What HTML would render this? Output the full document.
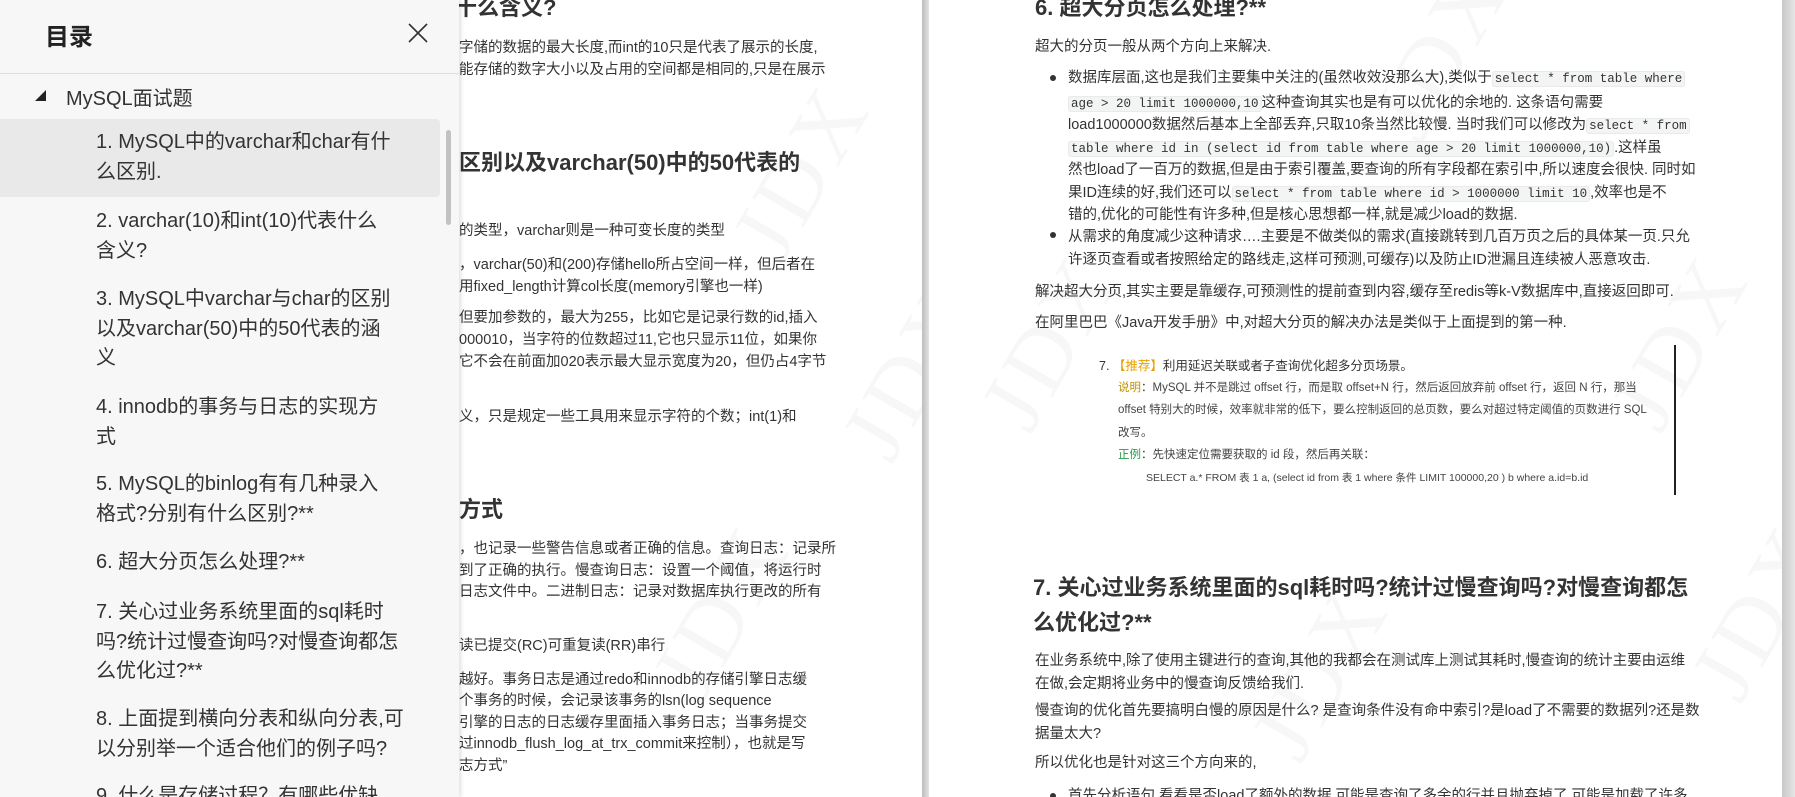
<!DOCTYPE html>
<html><head><meta charset="utf-8"><style>
*{margin:0;padding:0;box-sizing:border-box}
html,body{overflow:hidden}
body{width:1795px;height:797px;background:#d9d9d9;position:relative;font-family:"Liberation Sans","Noto Sans CJK SC",sans-serif;color:#333}
.pg{position:absolute;top:0;height:797px;background:#fff;overflow:hidden}
.l{position:absolute;white-space:nowrap;font-size:14.5px;line-height:22px;color:#333}
.h{position:absolute;white-space:nowrap;font-size:22px;font-weight:bold;color:#333;line-height:34px}
code{font-family:"Liberation Mono","DejaVu Sans Mono",monospace;font-size:12.5px;background:#f3f4f4;border:1px solid #eaeaea;border-radius:3px;padding:0 2px;color:#333}
.wm{position:absolute;font-family:"Liberation Serif",serif;font-size:90px;color:#f7f7f7;transform:rotate(-60deg);letter-spacing:6px}
.side{position:absolute;left:0;top:0;width:459px;height:797px;background:#f7f7f7;box-shadow:2px 0 4px rgba(0,0,0,.12);overflow:hidden}
.it{position:absolute;left:96px;font-size:20px;line-height:29.5px;color:#333;white-space:nowrap}
.dot{position:absolute;left:1050px;width:6px;height:6px;border-radius:3px;background:#333}
.im{position:absolute;white-space:nowrap;font-size:11.5px;line-height:22px;color:#444}
</style></head><body>

<div class="pg" style="left:440px;width:482px">
<div class="wm" style="left:270px;top:120px">JDX</div>
<div class="wm" style="left:190px;top:560px">JDX</div>
<div class="wm" style="left:380px;top:320px">JDX</div>
</div>
<div class="h" style="left:455px;top:-9px">十么含义?</div>
<div class="l" style="left:459px;top:37px">字储的数据的最大长度,而int的10只是代表了展示的长度,</div>
<div class="l" style="left:459px;top:59px">能存储的数字大小以及占用的空间都是相同的,只是在展示</div>
<div class="h" style="left:459px;top:146px">区别以及varchar(50)中的50代表的</div>
<div class="l" style="left:459px;top:220px">的类型，varchar则是一种可变长度的类型</div>
<div class="l" style="left:459px;top:254px">，varchar(50)和(200)存储hello所占空间一样，但后者在</div>
<div class="l" style="left:459px;top:276px">用fixed_length计算col长度(memory引擎也一样)</div>
<div class="l" style="left:459px;top:307px">但要加参数的，最大为255，比如它是记录行数的id,插入</div>
<div class="l" style="left:459px;top:329px">000010，当字符的位数超过11,它也只显示11位，如果你</div>
<div class="l" style="left:459px;top:351px">它不会在前面加020表示最大显示宽度为20，但仍占4字节</div>
<div class="l" style="left:459px;top:406px">义，只是规定一些工具用来显示字符的个数；int(1)和</div>
<div class="h" style="left:459px;top:493px">方式</div>
<div class="l" style="left:459px;top:538px">，也记录一些警告信息或者正确的信息。查询日志：记录所</div>
<div class="l" style="left:459px;top:560px">到了正确的执行。慢查询日志：设置一个阈值，将运行时</div>
<div class="l" style="left:459px;top:581px">日志文件中。二进制日志：记录对数据库执行更改的所有</div>
<div class="l" style="left:459px;top:635px">读已提交(RC)可重复读(RR)串行</div>
<div class="l" style="left:459px;top:669px">越好。事务日志是通过redo和innodb的存储引擎日志缓</div>
<div class="l" style="left:459px;top:690px">个事务的时候，会记录该事务的lsn(log sequence</div>
<div class="l" style="left:459px;top:712px">引擎的日志的日志缓存里面插入事务日志；当事务提交</div>
<div class="l" style="left:459px;top:733px">过innodb_flush_log_at_trx_commit来控制），也就是写</div>
<div class="l" style="left:459px;top:755px">志方式”</div>

<div style="position:absolute;left:922px;top:0;width:7px;height:797px;background:linear-gradient(90deg,#bdbdbd,#e2e2e2)"></div>

<div class="pg" style="left:929px;width:853px">
<div class="wm" style="left:420px;top:0px">JDX</div>
<div class="wm" style="left:30px;top:290px">JDX</div>
<div class="wm" style="left:660px;top:290px">JDX</div>
<div class="wm" style="left:300px;top:620px">JDX</div>
<div class="wm" style="left:740px;top:560px">JDX</div>
</div>
<div style="position:absolute;left:1782px;top:0;width:13px;height:797px;background:linear-gradient(90deg,#c8c8c8,#e6e6e6)"></div>

<div class="h" style="left:1035px;top:-9px">6. 超大分页怎么处理?**</div>
<div class="l" style="left:1035px;top:36px">超大的分页一般从两个方向上来解决.</div>
<div class="dot" style="top:75px"></div>
<div class="l" style="left:1068px;top:67px">数据库层面,这也是我们主要集中关注的(虽然收效没那么大),类似于<code>select * from table where</code></div>
<div class="l" style="left:1068px;top:92px"><code>age &gt; 20 limit 1000000,10</code>这种查询其实也是有可以优化的余地的. 这条语句需要</div>
<div class="l" style="left:1068px;top:114px">load1000000数据然后基本上全部丢弃,只取10条当然比较慢. 当时我们可以修改为<code>select * from</code></div>
<div class="l" style="left:1068px;top:137px"><code>table where id in (select id from table where age &gt; 20 limit 1000000,10)</code>.这样虽</div>
<div class="l" style="left:1068px;top:159px">然也load了一百万的数据,但是由于索引覆盖,要查询的所有字段都在索引中,所以速度会很快. 同时如</div>
<div class="l" style="left:1068px;top:182px">果ID连续的好,我们还可以<code>select * from table where id &gt; 1000000 limit 10</code>,效率也是不</div>
<div class="l" style="left:1068px;top:204px">错的,优化的可能性有许多种,但是核心思想都一样,就是减少load的数据.</div>
<div class="dot" style="top:232px"></div>
<div class="l" style="left:1068px;top:226px">从需求的角度减少这种请求….主要是不做类似的需求(直接跳转到几百万页之后的具体某一页.只允</div>
<div class="l" style="left:1068px;top:249px">许逐页查看或者按照给定的路线走,这样可预测,可缓存)以及防止ID泄漏且连续被人恶意攻击.</div>
<div class="l" style="left:1035px;top:281px">解决超大分页,其实主要是靠缓存,可预测性的提前查到内容,缓存至redis等k-V数据库中,直接返回即可.</div>
<div class="l" style="left:1035px;top:312px">在阿里巴巴《Java开发手册》中,对超大分页的解决办法是类似于上面提到的第一种.</div>

<div style="position:absolute;left:1674px;top:345px;width:2px;height:150px;background:#222"></div>
<div class="im" style="left:1099px;top:355px;font-size:12.5px;color:#333">7. <span style="color:#e8a000">【推荐】</span>利用延迟关联或者子查询优化超多分页场景。</div>
<div class="im" style="left:1118px;top:377px"><span style="color:#c09000">说明</span>：MySQL 并不是跳过 offset 行，而是取 offset+N 行，然后返回放弃前 offset 行，返回 N 行，那当</div>
<div class="im" style="left:1118px;top:399px">offset 特别大的时候，效率就非常的低下，要么控制返回的总页数，要么对超过特定阈值的页数进行 SQL</div>
<div class="im" style="left:1118px;top:422px">改写。</div>
<div class="im" style="left:1118px;top:444px"><span style="color:#2a9a4a">正例</span>：先快速定位需要获取的 id 段，然后再关联：</div>
<div class="im" style="left:1146px;top:467px;font-size:10.5px">SELECT a.* FROM 表 1 a, (select id from 表 1 where 条件 LIMIT 100000,20 ) b where a.id=b.id</div>

<div class="h" style="left:1033px;top:571px">7. 关心过业务系统里面的sql耗时吗?统计过慢查询吗?对慢查询都怎</div>
<div class="h" style="left:1033px;top:606px">么优化过?**</div>
<div class="l" style="left:1035px;top:650px">在业务系统中,除了使用主键进行的查询,其他的我都会在测试库上测试其耗时,慢查询的统计主要由运维</div>
<div class="l" style="left:1035px;top:673px">在做,会定期将业务中的慢查询反馈给我们.</div>
<div class="l" style="left:1035px;top:700px">慢查询的优化首先要搞明白慢的原因是什么? 是查询条件没有命中索引?是load了不需要的数据列?还是数</div>
<div class="l" style="left:1035px;top:723px">据量太大?</div>
<div class="l" style="left:1035px;top:752px">所以优化也是针对这三个方向来的,</div>
<div class="dot" style="top:793px"></div>
<div class="l" style="left:1068px;top:785px">首先分析语句,看看是否load了额外的数据,可能是查询了多余的行并且抛弃掉了,可能是加载了许多</div>

<div class="side">
<div style="position:absolute;left:45px;top:17px;font-size:24px;font-weight:bold;color:#222">目录</div>
<svg style="position:absolute;left:408px;top:23px" width="20" height="20" viewBox="0 0 20 20"><path d="M1 1L19 19M19 1L1 19" stroke="#333" stroke-width="1.6"/></svg>
<div style="position:absolute;left:0;top:73px;width:459px;height:1px;background:#dedede"></div>
<svg style="position:absolute;left:35px;top:90px" width="12" height="12"><path d="M11 0L11 11L0 11Z" fill="#222"/></svg>
<div style="position:absolute;left:66px;top:82px;font-size:20px;color:#333">MySQL面试题</div>
<div style="position:absolute;left:0;top:119px;width:440px;height:78px;background:#e9e9e9;border-radius:0 4px 4px 0"></div>
<div style="position:absolute;left:446px;top:130px;width:5px;height:95px;border-radius:3px;background:#c2c2c2"></div>
<div class="it" style="top:128px">1. MySQL中的varchar和char有什<br>么区别.</div>
<div class="it" style="top:207px">2. varchar(10)和int(10)代表什么<br>含义?</div>
<div class="it" style="top:285px">3. MySQL中varchar与char的区别<br>以及varchar(50)中的50代表的涵<br>义</div>
<div class="it" style="top:393px">4. innodb的事务与日志的实现方<br>式</div>
<div class="it" style="top:470px">5. MySQL的binlog有有几种录入<br>格式?分别有什么区别?**</div>
<div class="it" style="top:548px">6. 超大分页怎么处理?**</div>
<div class="it" style="top:598px">7. 关心过业务系统里面的sql耗时<br>吗?统计过慢查询吗?对慢查询都怎<br>么优化过?**</div>
<div class="it" style="top:705px">8. 上面提到横向分表和纵向分表,可<br>以分别举一个适合他们的例子吗?</div>
<div class="it" style="top:782px">9. 什么是存储过程？有哪些优缺</div>
</div>
</body></html>
